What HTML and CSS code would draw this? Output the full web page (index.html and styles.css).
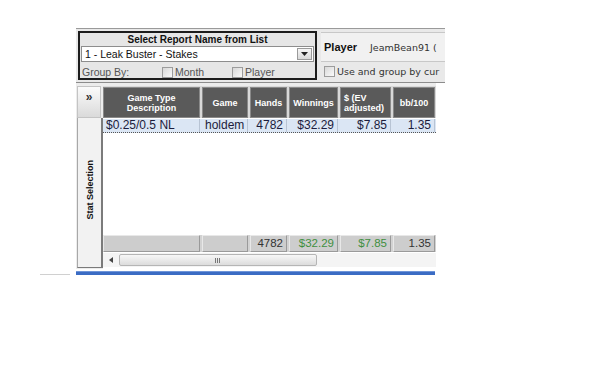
FILE: index.html
```html
<!DOCTYPE html>
<html>
<head>
<meta charset="utf-8">
<link rel="stylesheet" href="styles.css">
</head>
<body>
<div class="app">
  <div class="toolbar">
    <div class="report-box">
      <div class="report-title">Select Report Name from List</div>
      <div class="select">
        <span class="select-text">1 - Leak Buster - Stakes</span>
        <span class="select-btn"><svg width="7" height="4" viewBox="0 0 7 4"><path d="M0 0h7L3.5 4z" fill="#222"/></svg></span>
      </div>
      <div class="group-row">
        <span class="group-label">Group By:</span>
        <span class="check-item month"><span class="checkbox"></span>Month</span>
        <span class="check-item"><span class="checkbox"></span>Player</span>
      </div>
    </div>
    <div class="player-panel">
      <div class="player-box">
        <span class="player-label">Player</span>
        <span class="player-name">JeamBean91 (</span>
      </div>
      <div class="player-check"><span class="checkbox"></span>Use and group by cur</div>
    </div>
  </div>
  <div class="grid-area">
    <div class="side">
      <div class="expand">»</div>
      <div class="stat-strip"><span class="stat-label">Stat Selection</span></div>
    </div>
    <div class="grid">
      <div class="row head">
        <div class="cell">Game Type<br>Description</div>
        <div class="cell">Game</div>
        <div class="cell">Hands</div>
        <div class="cell">Winnings</div>
        <div class="cell left">$ (EV<br>adjusted)</div>
        <div class="cell">bb/100</div>
      </div>
      <div class="row data">
        <div class="cell l">$0.25/0.5 NL</div>
        <div class="cell l">holdem</div>
        <div class="cell r">4782</div>
        <div class="cell r">$32.29</div>
        <div class="cell r">$7.85</div>
        <div class="cell r">1.35</div>
      </div>
      <div class="empty"></div>
      <div class="row totals">
        <div class="cell"></div>
        <div class="cell"></div>
        <div class="cell r">4782</div>
        <div class="cell r green">$32.29</div>
        <div class="cell r green">$7.85</div>
        <div class="cell r">1.35</div>
      </div>
      <div class="hscroll">
        <span class="arrow"><svg width="4" height="6" viewBox="0 0 4 6"><path d="M4 0v6L0 3z" fill="#444"/></svg></span>
        <span class="thumb"><span class="grip"></span></span>
      </div>
    </div>
  </div>
  <div class="bluebar"></div>
</div>
<div class="faint"></div>
</body>
</html>
```
FILE: styles.css
```css
* { box-sizing: border-box; }
html, body { margin: 0; padding: 0; background: #fff; }
body { font-family: "Liberation Sans", Arial, sans-serif; color: #222; }

.app { margin: 28px 0 0 76px; width: 369px; }

.toolbar {
  height: 55px;
  border-top: 1px solid #9a9a9a;
  border-bottom: 1px solid #8c8c8c;
  background: #e9e9e9;
  display: flex;
  padding: 2px 0 0 2px;
  gap: 4px;
  overflow: hidden;
}
.report-box {
  flex: none;
  width: 239px;
  height: 49px;
  border: 2px solid #1c1c1c;
  background: #e6e6e6;
  padding: 0 1px;
}
.report-title {
  font-weight: bold;
  font-size: 10px;
  text-align: center;
  line-height: 11px;
  margin-top: 1px;
  color: #111;
}
.select {
  height: 16px;
  margin-top: 1px;
  background: #fff;
  border: 1px solid #8d8d8d;
  display: flex;
  align-items: center;
  justify-content: space-between;
  padding: 0 1px 0 3px;
}
.select-text { font-size: 10.5px; color: #111; }
.select-btn {
  width: 15px; height: 12px;
  border: 1px solid #9a9a9a;
  background: linear-gradient(#f6f6f6, #d8d8d8);
  display: flex; align-items: center; justify-content: center;
}
.group-row {
  display: flex;
  align-items: center;
  height: 16px;
  margin-top: 2px;
  font-size: 10.5px;
  color: #555;
}
.group-label { width: 81px; padding-left: 1px; }
.check-item { display: flex; align-items: center; gap: 2px; }
.check-item.month { width: 70px; }
.checkbox {
  flex: none;
  display: inline-block;
  width: 11px; height: 11px;
  border: 1px solid #9c9c9c;
  background: linear-gradient(135deg, #d8d8d8, #fafafa);
}
.player-panel { flex: 1; min-width: 0; display: flex; flex-direction: column; overflow: hidden; }
.player-box {
  height: 30px;
  margin-top: 1px;
  background: #f1f1f1;
  border-top: 1px solid #c8c8c8;
  border-bottom: 1px solid #c8c8c8;
  display: flex;
  align-items: center;
  padding-left: 3px;
  white-space: nowrap;
}
.player-label { font-weight: bold; font-size: 11px; color: #111; width: 46px; flex: none; }
.player-name { font-family: "DejaVu Sans", sans-serif; font-size: 9.5px; color: #333; }
.player-check {
  display: flex; align-items: center; gap: 2px;
  font-family: "DejaVu Sans", sans-serif;
  font-size: 9.5px; color: #333;
  padding: 4px 0 0 3px;
  white-space: nowrap;
}

.grid-area {
  display: flex;
  width: 360px;
  background: #ececec;
  padding-top: 3px;
  height: 186px;
}
.side {
  width: 26px;
  margin-left: 1px;
  display: flex;
  flex-direction: column;
}
.expand {
  height: 32px;
  width: 24px;
  background: linear-gradient(#fbfbfb, #dadada);
  border: 1px solid #c4c4c4;
  font-size: 12px;
  font-weight: bold;
  text-align: center;
  line-height: 20px;
  color: #333;
}
.stat-strip {
  height: 150px;
  background: #f2f2f2;
  border-left: 1px solid #a8a8a8;
  border-right: 2px solid #7b7b7b;
  border-bottom: 1px solid #7b7b7b;
  display: flex;
  align-items: center;
  justify-content: center;
  padding-bottom: 6px;
}
.stat-label {
  writing-mode: vertical-rl;
  transform: rotate(180deg);
  font-size: 9px;
  font-weight: bold;
  color: #111;
}

.grid { width: 333px; display: flex; flex-direction: column; background: #fff; }
.row {
  display: grid;
  grid-template-columns: 97px 46px 37px 49px 51px 42px;
  column-gap: 2px;
}
.row.head { background: #d8d8d8; height: 32px; }
.head .cell {
  margin-top: 1px;
  background: #5a5a5a;
  border: 1px solid #8a8a8a;
  color: #fff;
  font-weight: bold;
  font-size: 9px;
  line-height: 10px;
  display: flex; align-items: center; justify-content: center;
  text-align: center;
}
.head .cell.left { justify-content: flex-start; text-align: left; padding-left: 3px; }
.row.data {
  background: #dbe6f4;
  height: 14px;
  margin-top: 1px;
  border-bottom: 1px dotted #555;
  font-size: 12px;
  line-height: 13px;
  color: #1c1c3c;
}
.data .cell { border-right: 1px solid #b8c4d4; padding: 0 3px; }
.cell.l { text-align: left; }
.cell.r { text-align: right; padding-right: 3px; }
.empty { height: 102px; background: #fff; }
.row.totals { background: #d2d2d2; height: 17px; column-gap: 2px; }
.totals .cell {
  background: #cdcdcd;
  border: 1px solid #e8e8e8;
  border-right-color: #9a9a9a;
  border-bottom-color: #9a9a9a;
  font-size: 11.5px;
  line-height: 15px;
  color: #333;
}
.totals .green { color: #3f8f3f; }
.hscroll {
  height: 15px;
  background: #f4f4f4;
  border-top: 1px solid #fff;
  display: flex;
  align-items: center;
}
.arrow { width: 15px; display: flex; justify-content: center; }
.thumb {
  width: 198px;
  height: 12px;
  margin-left: 1px;
  border: 1px solid #b5b5b5;
  border-radius: 2px;
  background: linear-gradient(#f7f7f7, #dcdcdc);
  display: flex; align-items: center; justify-content: center;
}
.grip {
  width: 6px; height: 5px;
  background: repeating-linear-gradient(90deg, #777 0 1px, transparent 1px 2px);
}
.bluebar {
  height: 5px;
  margin-top: 2px;
  width: 359px;
  background: #3b6cc4;
  border-top: 1px solid #6f95d8;
}
.faint {
  width: 30px; height: 1px;
  margin: -2px 0 0 40px;
  background: #d0d0d0;
}
```
